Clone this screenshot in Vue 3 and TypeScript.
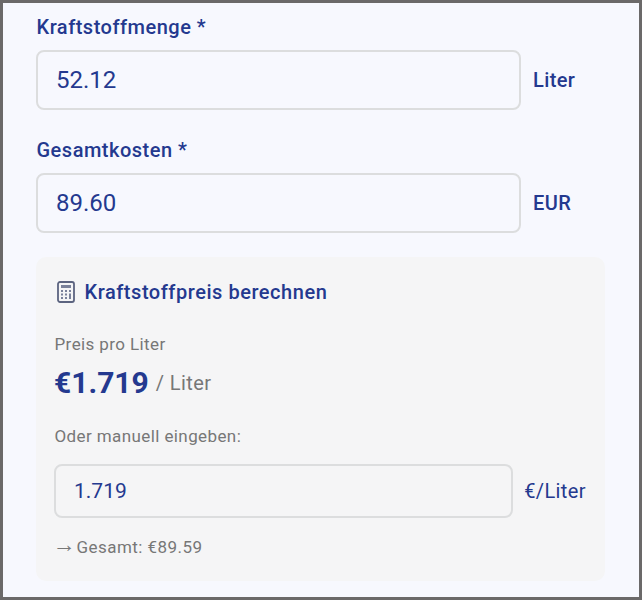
<script setup lang="ts">
const fields = [
  { label: 'Kraftstoffmenge *', value: '52.12', unit: 'Liter' },
  { label: 'Gesamtkosten *', value: '89.60', unit: 'EUR' },
]
</script>

<template>
  <div class="frame">
    <div v-for="f in fields" :key="f.label" class="field">
      <label class="label">{{ f.label }}</label>
      <div class="row">
        <input class="input" :value="f.value" readonly />
        <span class="unit">{{ f.unit }}</span>
      </div>
    </div>
    <section class="card">
      <div class="card-title">
        <svg class="icon" width="20" height="22" viewBox="0 0 20 22" fill="none">
          <rect x="2" y="1" width="16" height="20" rx="2" stroke="#5c6480" stroke-width="1.8" />
          <rect x="5" y="4" width="10" height="3" fill="#7a819a" />
          <g fill="#7a819a">
            <rect x="5" y="9" width="2" height="2" /><rect x="9" y="9" width="2" height="2" /><rect x="13" y="9" width="2" height="2" />
            <rect x="5" y="12.5" width="2" height="2" /><rect x="9" y="12.5" width="2" height="2" /><rect x="13" y="12.5" width="2" height="5.5" />
            <rect x="5" y="16" width="2" height="2" /><rect x="9" y="16" width="2" height="2" />
          </g>
        </svg>
        <span>Kraftstoffpreis berechnen</span>
      </div>
      <div class="muted price-label">Preis pro Liter</div>
      <div class="price"><strong>€1.719</strong><span>/ Liter</span></div>
      <div class="muted manual">Oder manuell eingeben:</div>
      <div class="row small-row">
        <input class="input small" value="1.719" readonly />
        <span class="small-unit">€/Liter</span>
      </div>
      <div class="muted total"><span class="arrow">→</span>Gesamt: €89.59</div>
    </section>
  </div>
</template>

<style>
html, body { margin: 0; }
</style>

<style scoped>
.frame {
  box-sizing: border-box;
  width: 642px;
  height: 600px;
  border: 3px solid #6b6969;
  background: #f7f8fe;
  padding: 12px 34px 0 33px;
  overflow: hidden;
  font-family: Roboto, sans-serif;
  color: #24398f;
}
.field { margin-bottom: 28px; }
.field:nth-child(2) { margin-bottom: 24px; }
.label {
  display: block;
  font-size: 20px;
  font-weight: 500;
  line-height: 24px;
  margin-bottom: 11px;
  padding-left: 0.5px;
  letter-spacing: 0.5px;
}
.row { display: flex; align-items: center; gap: 12px; }
.input {
  box-sizing: border-box;
  flex: 1;
  min-width: 0;
  height: 60px;
  padding: 0 18px;
  border: 2px solid #dcddde;
  border-radius: 8px;
  background: transparent;
  color: #24398f;
  font: 400 24px Roboto, sans-serif;
  outline: none;
}
.unit { width: 72px; font-size: 20px; font-weight: 500; letter-spacing: 0.4px; }
.card {
  height: 324px;
  box-sizing: border-box;
  padding: 22px 18px 0;
  background: #f5f5f6;
  border-radius: 10px;
}
.card-title {
  display: flex;
  align-items: center;
  gap: 8.5px;
  font-size: 20px;
  font-weight: 500;
  line-height: 26px;
  letter-spacing: 0.54px;
}
.icon { flex: none; margin-left: 2px; }
.muted { color: #777; font-size: 17px; line-height: 20px; letter-spacing: 0.4px; padding-left: 0.5px; }
.price-label { margin-top: 29px; }
.price { display: flex; align-items: center; gap: 7px; height: 36px; margin-top: 11px; line-height: 36px; }
.price strong { font-size: 30px; font-weight: 700; }
.price span { color: #777; font-size: 20px; line-height: 28px; letter-spacing: 0.4px; }
.manual { margin-top: 25px; }
.small-row { margin-top: 18px; margin-right: 1px; gap: 11px; }
.small { height: 54px; font-size: 21px; padding: 0 18px; }
.small-unit { font-size: 20px; letter-spacing: 0.4px; }
.total { margin-top: 19px; letter-spacing: 0.45px; }
.arrow {
  display: inline-block;
  width: 24px;
  margin-left: -2px;
  font-family: "Liberation Sans", sans-serif;
  font-size: 23px;
  line-height: 14px;
  letter-spacing: 0;
  vertical-align: top;
}
</style>
